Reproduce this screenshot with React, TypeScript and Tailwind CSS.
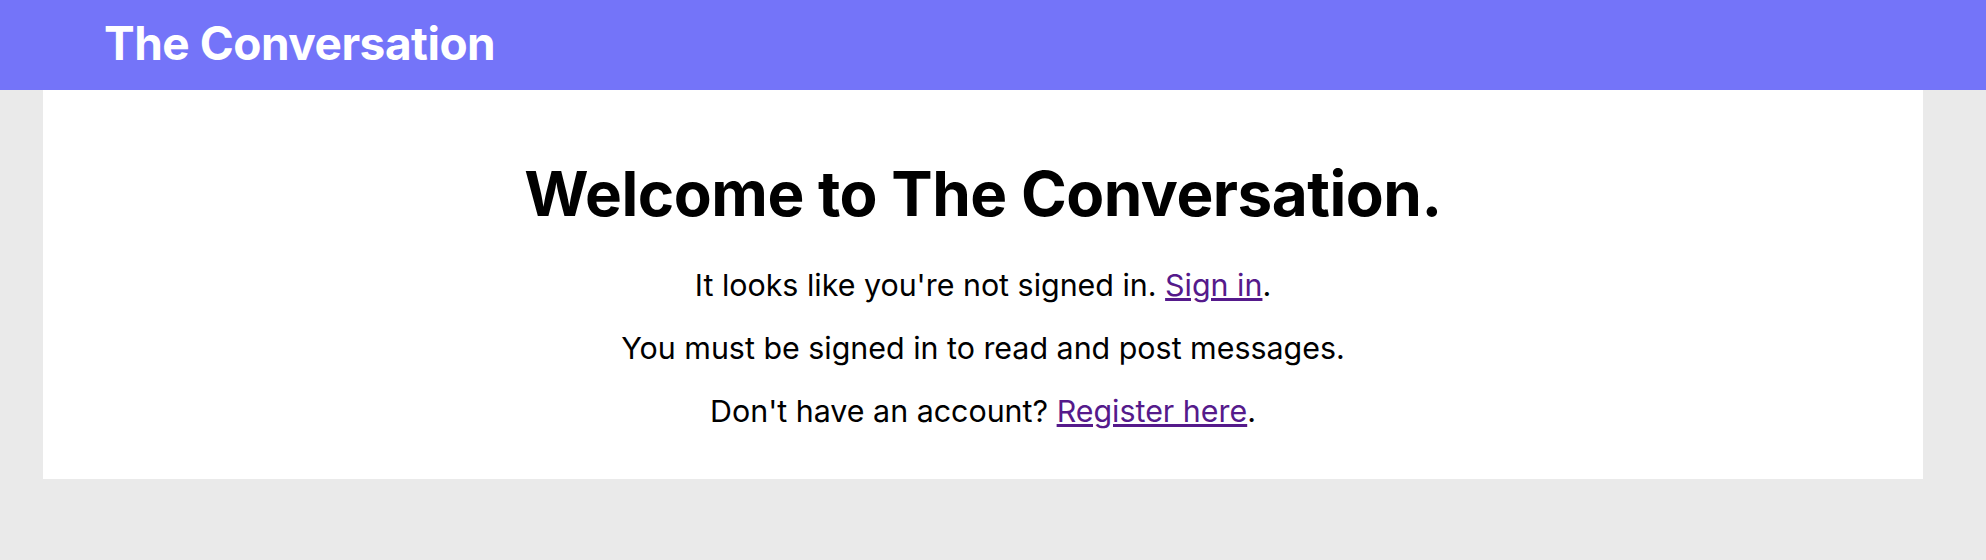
import React from 'react';

const App: React.FC = () => {
  return (
    <div className="min-h-[560px] bg-[#eaeaea] font-['Inter',sans-serif] text-black">
      {/* Header */}
      <header className="h-[90px] bg-[#7474f9] flex items-center pl-[104px] pb-[4px]">
        <h1 className="text-[46px] font-bold text-white tracking-[-0.5px]">The Conversation</h1>
      </header>

      {/* Main card */}
      <main className="ml-[43px] w-[1880px] bg-white flex flex-col items-center pt-[67px] pb-[50px]">
        <h2 className="text-[62px] font-bold leading-[1.2] tracking-[-0.5px]">Welcome to The Conversation.</h2>
        <div className="flex flex-col items-center gap-[27px] mt-[36px] text-[30.4px] leading-[36px]">
          <p>
            It looks like you're not signed in.{' '}
            <a href="#" className="text-[#551a8b] underline">Sign in</a>.
          </p>
          <p>You must be signed in to read and post messages.</p>
          <p>
            Don't have an account?{' '}
            <a href="#" className="text-[#551a8b] underline">Register here</a>.
          </p>
        </div>
      </main>
    </div>
  );
};

export default App;
